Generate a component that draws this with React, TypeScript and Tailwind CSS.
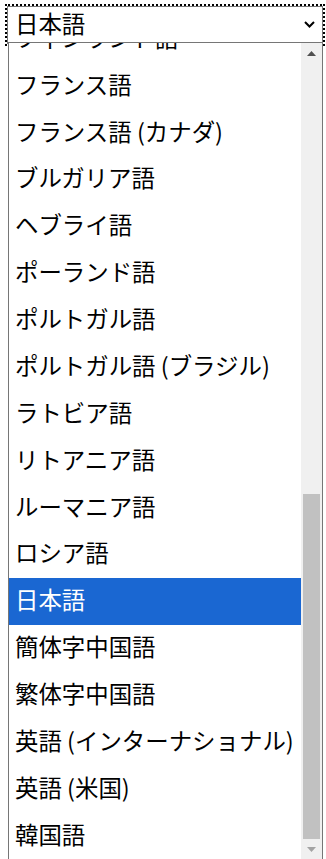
const options = [
  'フィンランド語',
  'フランス語',
  'フランス語 (カナダ)',
  'ブルガリア語',
  'ヘブライ語',
  'ポーランド語',
  'ポルトガル語',
  'ポルトガル語 (ブラジル)',
  'ラトビア語',
  'リトアニア語',
  'ルーマニア語',
  'ロシア語',
  '日本語',
  '簡体字中国語',
  '繁体字中国語',
  '英語 (インターナショナル)',
  '英語 (米国)',
  '韓国語',
];

const selected = '日本語';

const App = () => {
  return (
    <div className="relative h-[859px] w-[326px] overflow-hidden bg-white font-['Noto_Sans_CJK_JP',sans-serif] text-[23.4375px] text-black">
      {/* closed select with focus ring */}
      <div className="pl-[5px] pt-[4px]">
        <div className="h-[42px] w-[320px] border-2 border-dotted border-black">
          <div className="flex h-full items-center justify-between border border-[#767676] pr-[7px] pb-[2px] pl-[7px] leading-none">
            <span>日本語</span>
            <svg width="11" height="7" viewBox="0 0 11 7">
              <polyline points="1,1 5.5,5.5 10,1" fill="none" stroke="#000" strokeWidth="2" />
            </svg>
          </div>
        </div>
      </div>

      {/* open option list */}
      <div className="absolute top-[42px] left-[8px] flex h-[817px] w-[315px] border-x border-t border-[#767676] bg-white">
        <div className="w-[292px] overflow-hidden">
          <div className="mt-[-27.5px]">
            {options.map((opt) => (
              <div
                key={opt}
                className={
                  opt === selected
                    ? 'flex h-[46.875px] items-center bg-[#1a67d2] pb-[3px] pl-[6px] whitespace-nowrap text-white'
                    : 'flex h-[46.875px] items-center pb-[3px] pl-[6px] whitespace-nowrap'
                }
              >
                {opt}
              </div>
            ))}
          </div>
        </div>

        <div className="flex w-[21px] flex-col items-center bg-[#f0f0f0]">
          <svg className="mt-[8px]" width="9" height="5" viewBox="0 0 9 5">
            <polygon points="0,5 4.5,0 9,5" fill="#505050" />
          </svg>
          <div className="mt-[438px] h-[345px] w-[17px] bg-[#c1c1c1]" />
          <svg className="mt-[8px]" width="9" height="5" viewBox="0 0 9 5">
            <polygon points="0,0 9,0 4.5,5" fill="#a3a3a3" />
          </svg>
        </div>
      </div>
    </div>
  );
};

export default App;
